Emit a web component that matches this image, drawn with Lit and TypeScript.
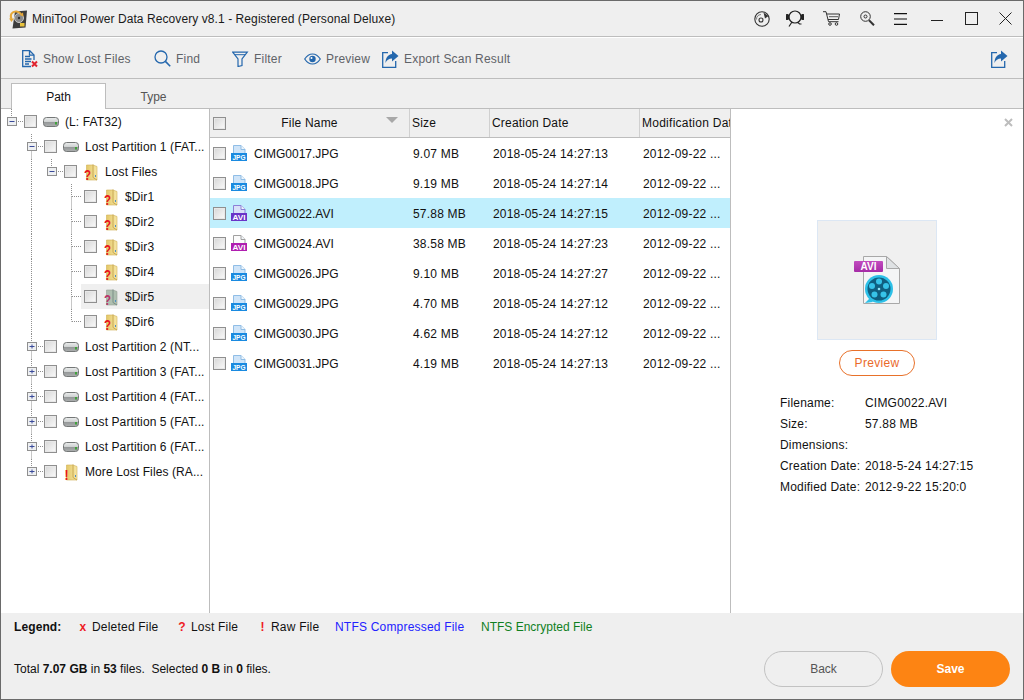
import { LitElement, html, css, svg } from "lit";
import { customElement } from "lit/decorators.js";

const hdd = html`<svg class="ic" width="16" height="16" viewBox="0 0 16 16">
  <defs><linearGradient id="hg" x1="0" y1="0" x2="0" y2="1"><stop offset="0" stop-color="#eceeee"/><stop offset=".5" stop-color="#cdd0d0"/><stop offset=".55" stop-color="#96999a"/><stop offset="1" stop-color="#adb0b0"/></linearGradient></defs>
  <rect x=".5" y="3.500" width="15" height="9" rx="3" fill="url(#hg)" stroke="#747777"/>
  <rect x="12" y="8" width="2" height="2.500" fill="#3fa23a"/>
</svg>`;

function folder(mark: string, color: string, dim = false) {
  return html`<svg class="ic tall" width="16" height="22" viewBox="0 0 16 22">
    <defs><linearGradient id="fg" x1="0" y1="0" x2="1" y2="0"><stop offset="0" stop-color="#e4c766"/><stop offset="1" stop-color="#f6e6a6"/></linearGradient></defs>
    <path d="M3.500 1h6.500l4 1.500V16H3.500z" fill="${dim ? "#aebfb0" : "url(#fg)"}" stroke="${dim ? "#93a095" : "#d0b055"}" stroke-width=".6"/>
    <path d="M10 .5V13.500L14 16" fill="none" stroke="${dim ? "#7b8f86" : "#c8a850"}" stroke-width="1"/>
    <rect x="12" y="11" width="1" height="2" fill="#4c8fc9"/>
    <text x="${mark === "!" ? 1.500 : 1}" y="16" textLength="${mark === "!" ? 4 : 7}" lengthAdjust="spacingAndGlyphs" font-family="Liberation Sans, sans-serif" font-weight="700" font-size="15" fill="${dim ? "#b8356a" : color}">${mark}</text>
  </svg>`;
}

function fileIcon(kind: string, selected = false) {
  const jpg = kind === "JPG";
  const page = jpg ? "#8fbde6" : selected ? "#8a80d8" : "#a0a0a0";
  const fill = jpg ? "#cfe4f8" : selected ? "#d9e0f8" : "#fbfbfb";
  const band = jpg ? "#1a8ae0" : selected ? "#6a34c8" : "#b01eb0";
  return html`<svg class="fi" width="16" height="16" viewBox="0 0 16 16">
    <path d="M2.500 .5h7.500l4 4v11h-11.500z" fill="${fill}" stroke="${page}"/>
    <path d="M10 .5v4h4" fill="#f2f6fa" stroke="${page}"/>
    <rect x="0" y="8" width="16" height="8" fill="${band}"/>
    <text x="1.500" y="14.600" textLength="13" lengthAdjust="spacingAndGlyphs" font-family="Liberation Sans, sans-serif" font-weight="700" font-size="7.500" fill="#fff">${kind}</text>
  </svg>`;
}

const lostIcon = html`<svg width="16" height="18" viewBox="0 0 16 18" fill="none" stroke="#2467ad" stroke-width="1.300">
  <path d="M9 16.500H.7V.7h7l4.300 4.300V10"/><path d="M7.500 .7v4.500h4.500"/><path d="M3 6.500h5M3 9h6.500M3 11.500h6M3 14h4" />
  <path d="M10 11.500l5 5M15 11.500l-5 5" stroke="#e0232f" stroke-width="2"/>
</svg>`;
const findIcon = html`<svg width="17" height="17" viewBox="0 0 17 17" fill="none" stroke="#2467ad" stroke-width="1.300"><circle cx="7" cy="7" r="6"/><path d="M11.400 11.400l4.800 4.800" stroke-width="1.600"/></svg>`;
const filterIcon = html`<svg width="17" height="16" viewBox="0 0 17 16" fill="none" stroke="#2467ad" stroke-width="1.200"><path d="M.7 1.200h14.600L10 8v6.500l-4 1V8z"/><path d="M3 3.700h10" stroke-width="1"/></svg>`;
const eyeIcon = html`<svg width="17" height="12" viewBox="0 0 17 12"><path d="M.7 6C3 2.500 5.500 1 8.500 1s5.500 1.500 7.800 5c-2.300 3.500-4.800 5-7.800 5S3 9.500.7 6z" fill="none" stroke="#2467ad" stroke-width="1.200"/><circle cx="8.500" cy="6" r="3.200" fill="#2467ad"/><circle cx="7.500" cy="5" r="1" fill="#fff"/></svg>`;
const exportIcon = html`<svg width="17" height="18" viewBox="0 0 17 18"><path d="M6 2.700H.7v14.600h13V11" fill="none" stroke="#2467ad" stroke-width="1.300"/><path d="M10 .5l6.500 5.500-6.500 5.500V8.500C7 8.500 4.500 10 3.500 13c0-5 2.500-8.500 6.500-9z" fill="#2467ad"/></svg>`;

const disc = html`<svg width="16" height="16" viewBox="0 0 16 16" fill="none" stroke="#333" stroke-width="1.100"><circle cx="8" cy="8" r="7.200"/><circle cx="7" cy="9" r="2"/><path d="M7 3.500a5 5 0 0 0-4.500 5" stroke-width=".6"/><path d="M9.500 1.500l5 3.500-3.500 2.500z" fill="#333" stroke="none"/></svg>`;
const headset = html`<svg width="18" height="17" viewBox="0 0 18 17" fill="none" stroke="#222" stroke-width="1.200"><circle cx="9" cy="7" r="6"/><path d="M6 12l-3 4.500M12 12.500l1.500 1.500h2"/><rect x="0" y="4.500" width="2.600" height="5" rx="1.200" fill="#222"/><rect x="15.400" y="4.500" width="2.600" height="5" rx="1.200" fill="#222"/></svg>`;
const cart = html`<svg width="17" height="15" viewBox="0 0 17 15" fill="none" stroke="#333" stroke-width="1"><path d="M0 .7h3l2.500 10h10"/><path d="M3.800 3h12.700l-1 5.500H5"/><path d="M6 5.700h9" stroke-width=".8"/><circle cx="7" cy="13" r="1.300"/><circle cx="13.500" cy="13" r="1.300"/></svg>`;
const searchKey = html`<svg width="15" height="15" viewBox="0 0 15 15" fill="none" stroke="#333"><circle cx="5.500" cy="5.500" r="4.800"/><circle cx="5.500" cy="5.500" r="1.500"/><path d="M9 9.300l5 5" stroke-width="2"/></svg>`;
const burger = html`<svg width="13" height="12" viewBox="0 0 13 12" stroke="#111" stroke-width="1.100"><path d="M0 .6h13M0 6h13M0 11.400h13"/></svg>`;
const minI = html`<svg width="14" height="14" viewBox="0 0 14 14" stroke="#222"><path d="M1 8.500h12"/></svg>`;
const maxI = html`<svg width="13" height="13" viewBox="0 0 13 13" fill="none" stroke="#222"><rect x=".5" y=".5" width="12" height="12"/></svg>`;
const closeI = html`<svg width="13" height="13" viewBox="0 0 13 13" stroke="#222"><path d="M.5.500l12 12M12.500.500l-12 12"/></svg>`;

const logo = html`<svg width="20" height="20" viewBox="0 0 20 20">
  <path d="M7 2.500l12-1-1.500 17-13 1z" fill="#3d3d3d"/>
  <circle cx="11" cy="9" r="4.500" fill="#8a8a8a" stroke="#c9c9c9" stroke-width="1"/>
  <circle cx="11" cy="9" r="1.200" fill="#333"/>
  <path d="M3.500 10C1.500 6 4 2 8.500 2.500c2 .2 3.500 1 4.500 2.500" fill="none" stroke="#e6a93a" stroke-width="2"/>
  <path d="M1 9.500h5L3.500 13z" fill="#e6a93a"/>
  <path d="M15 3.500l.5 4-4-1.500z" fill="#e6a93a"/>
  <rect x="12" y="14" width="4.500" height="3.500" fill="#e8c23c"/>
</svg>`;

const largeAvi = html`<svg width="46" height="48" viewBox="0 0 46 48">
  <defs><linearGradient id="pg" x1="0" y1="0" x2="0" y2="1"><stop offset="0" stop-color="#c24cc0"/><stop offset="1" stop-color="#a52ba6"/></linearGradient></defs>
  <path d="M9.500 .5h23l13 12v35h-36z" fill="#f4f5f6" stroke="#a8a8a8"/>
  <path d="M32.500 .5v12h13z" fill="#dfe2e4" stroke="#a8a8a8"/>
  <rect x="0" y="5" width="29" height="11" rx="1" fill="url(#pg)"/>
  <text x="14.500" y="14" text-anchor="middle" font-family="Liberation Sans, sans-serif" font-weight="700" font-size="10" fill="#fff">AVI</text>
  <circle cx="25" cy="33" r="14" fill="#2cc0e8"/>
  <circle cx="25" cy="33" r="11.500" fill="#0f5f80"/>
  ${[[25, 25.5], [32, 30], [29.500, 38.500], [20.500, 38.500], [18, 30]].map(([x, y]) => svg`<circle cx="${x}" cy="${y}" r="3" fill="#37c3e8"/>`)}
  <circle cx="25" cy="33" r="1.300" fill="#8fe2f5"/>
  <path d="M11 47l5-5 3 4z" fill="#2cc0e8"/>
</svg>`;

type Guide = "v" | "l" | "t" | "stub";

function guideCell(kind: Guide, exp?: "+" | "-") {
  const vBot = kind === "v" || kind === "t";
  const horiz = kind !== "v";
  return html`<svg class="guide" width="23" height="25" viewBox="0 0 23 25">
    <g stroke="#8f8f8f" stroke-dasharray="1 1" fill="none">
      <path d="M10.500 0V12.500"/>
      ${vBot ? svg`<path d="M10.500 12.500V25"/>` : ""}
      ${horiz ? svg`<path d="M11 12.500H${kind === "l" || (kind === "t" && !exp) ? 20 : 22}"/>` : ""}
    </g>
    ${exp
      ? svg`<rect x="6.500" y="8.500" width="9" height="8" fill="#eef0f2" stroke="#8f8f8f"/>
        <path d="M8.500 12.500h5" stroke="#3a4a9a"/>
        ${exp === "+" ? svg`<path d="M11 10.500v4" stroke="#3a4a9a"/>` : ""}`
      : ""}
  </svg>`;
}

interface TreeRow { level: number; exp?: "+" | "-"; icon: unknown; label: string; sel?: boolean; last?: boolean; }

const q = (dim = false) => folder("?", "#e8141c", dim);
const treeRows: TreeRow[] = [
  { level: 0, exp: "-", icon: hdd, label: "(L: FAT32)" },
  { level: 1, exp: "-", icon: hdd, label: "Lost Partition 1 (FAT..." },
  { level: 2, exp: "-", icon: q(), label: "Lost Files" },
  { level: 3, icon: q(), label: "$Dir1" },
  { level: 3, icon: q(), label: "$Dir2" },
  { level: 3, icon: q(), label: "$Dir3" },
  { level: 3, icon: q(), label: "$Dir4" },
  { level: 3, icon: q(true), label: "$Dir5", sel: true },
  { level: 3, icon: q(), label: "$Dir6", last: true },
  { level: 1, exp: "+", icon: hdd, label: "Lost Partition 2 (NT..." },
  { level: 1, exp: "+", icon: hdd, label: "Lost Partition 3 (FAT..." },
  { level: 1, exp: "+", icon: hdd, label: "Lost Partition 4 (FAT..." },
  { level: 1, exp: "+", icon: hdd, label: "Lost Partition 5 (FAT..." },
  { level: 1, exp: "+", icon: hdd, label: "Lost Partition 6 (FAT..." },
  { level: 1, exp: "+", icon: folder("!", "#e8141c"), label: "More Lost Files (RA...", last: true },
];

const files = [
  ["JPG", "CIMG0017.JPG", "9.07 MB", "2018-05-24 14:27:13"],
  ["JPG", "CIMG0018.JPG", "9.19 MB", "2018-05-24 14:27:14"],
  ["AVI", "CIMG0022.AVI", "57.88 MB", "2018-05-24 14:27:15"],
  ["AVI", "CIMG0024.AVI", "38.58 MB", "2018-05-24 14:27:23"],
  ["JPG", "CIMG0026.JPG", "9.10 MB", "2018-05-24 14:27:27"],
  ["JPG", "CIMG0029.JPG", "4.70 MB", "2018-05-24 14:27:12"],
  ["JPG", "CIMG0030.JPG", "4.62 MB", "2018-05-24 14:27:12"],
  ["JPG", "CIMG0031.JPG", "4.19 MB", "2018-05-24 14:27:13"],
];

const info = [
  ["Filename:", "CIMG0022.AVI"],
  ["Size:", "57.88 MB"],
  ["Dimensions:", ""],
  ["Creation Date:", "2018-5-24 14:27:15"],
  ["Modified Date:", "2012-9-22 15:20:0"],
];

const lineCell = html`<svg class="line" width="20" height="25" viewBox="0 0 20 25"><path d="M10.500 0V25" stroke="#8f8f8f" stroke-dasharray="1 1"/></svg>`;
const blank = html`<div class="indent"></div>`;

@customElement("app-root")
export class AppRoot extends LitElement {
  static styles = css`
    :host { display: block; width: 1024px; height: 700px; box-sizing: border-box; border: 1px solid #6a6a6a; background: #efefef;
      font-family: "Liberation Sans", Arial, sans-serif; font-size: 12px; color: #111; overflow: hidden; }
    * { box-sizing: border-box; }
    svg { display: block; flex: none; }
    .win { display: flex; flex-direction: column; height: 100%; }
    .title { height: 36px; flex: none; display: flex; align-items: center; border-bottom: 1px solid #bdbdbd; padding-left: 7px; }
    .title .name { margin-left: 4px; letter-spacing: .08px; white-space: nowrap; color: #1a1a1a; }
    .title .ctl { margin-left: auto; display: grid; grid-template-columns: 40px 26px 46px 26px 40px 34px 34px 34px; justify-items: center; align-items: center; padding-right: 1px; }
    .tools { height: 42px; flex: none; border-top: 1px solid #fff; border-bottom: 1px solid #bdbdbd; display: flex; align-items: center; padding: 1px 15px 0 21px; color: #5f6368; }
    .tool { display: flex; align-items: center; gap: 5px; white-space: nowrap; letter-spacing: .2px; }
    .tools .end { margin-left: auto; }
    .tabs { height: 30px; flex: none; display: flex; align-items: flex-end; border-bottom: 1px solid #bdbdbd; padding-left: 10px; }
    .tab { width: 95px; height: 26px; display: flex; align-items: center; justify-content: center; color: #555; margin-bottom: -1px; padding-top: 2px; }
    .tab.on { background: #fff; border: 1px solid #bdbdbd; border-bottom: none; color: #111; padding-top: 0; }
    .main { flex: 1; min-height: 0; display: flex; background: #fff; }
    .tree { width: 209px; flex: none; border-right: 1px solid #bdbdbd; }
    .row { display: flex; height: 25px; align-items: stretch; }
    .indent { width: 20px; flex: none; }
    .guide { margin-right: -3px; }
    .cell { flex: 1; min-width: 0; display: flex; align-items: center; padding-left: 3px; }
    .cell.sel { background: #efefef; }
    .check { width: 13px; height: 13px; flex: none; border: 1px solid #8f8f8f; background: linear-gradient(135deg, #d6d6d6, #fbfbfb); box-shadow: inset 0 0 0 1px #e8e8e8; }
    .ic { margin-left: 6px; }
    .ic.tall { margin-bottom: -6px; }
    .lbl { margin-left: 6px; white-space: nowrap; letter-spacing: .1px; }
    .table { width: 521px; flex: none; border-right: 1px solid #bdbdbd; display: flex; flex-direction: column; }
    .thead, .tr { display: grid; grid-template-columns: 200px 80px 150px 1fr; }
    .thead { height: 29px; background: #efefef; border-bottom: 1px solid #bdbdbd; }
    .th { display: flex; align-items: center; padding-left: 2px; border-right: 1px solid #d0d0d0; overflow: hidden; white-space: nowrap; letter-spacing: .2px; }
    .th:last-child { border-right: none; letter-spacing: .26px; }
    .th.first { padding-left: 3px; position: relative; }
    .th .t { flex: 1; text-align: center; padding-right: 16px; }
    .th .arrow { position: absolute; left: 176px; top: 8px; width: 0; height: 0; border-left: 6px solid transparent; border-right: 6px solid transparent; border-top: 6px solid #a8a8a8; }
    .tr { height: 30px; align-items: center; }
    .tr.on { background: #c0effd; }
    .td { padding: 1px 0 0 3px; white-space: nowrap; letter-spacing: .2px; overflow: hidden; }
    .td.first { display: flex; align-items: center; letter-spacing: 0; padding-top: 0; }
    .fi { margin-left: 5px; }
    .fn { margin: 1px 0 0 7px; }
    .preview { flex: 1; display: flex; flex-direction: column; align-items: center; position: relative; }
    .x { position: absolute; right: 10px; top: 9px; }
    .pbox { margin-top: 111px; width: 120px; height: 120px; flex: none; background: #f0f0f0; border: 1px solid #dce7f4; display: flex; align-items: center; justify-content: center; }
    .pbtn { margin-top: 10px; width: 76px; height: 26px; flex: none; border: 1px solid #e8712a; border-radius: 13px; color: #ea6a2a; display: flex; align-items: center; justify-content: center; letter-spacing: .3px; }
    .meta { align-self: flex-start; margin: 16px 0 0 49px; display: grid; grid-template-columns: 85px auto; grid-auto-rows: 21px; align-items: center; letter-spacing: .2px; }
    .legend { height: 27px; flex: none; display: flex; align-items: center; padding-left: 13px; white-space: nowrap; letter-spacing: .2px; }
    .it { display: flex; flex: none; }
    .lead { width: 64px; font-weight: 700; letter-spacing: .1px; }
    .m { color: #ee1c25; font-weight: 700; text-align: center; flex: none; }
    .m1 { width: 10px; margin-right: 4px; } .m2 { width: 8px; margin-right: 5px; } .m3 { width: 9px; margin-right: 4px; }
    .del { width: 100px; } .lost { width: 80px; } .raw { width: 77px; }
    .comp { width: 146px; color: #2222ff; } .enc { color: #0f7f1e; letter-spacing: 0; }
    .foot { height: 59px; flex: none; display: flex; align-items: flex-start; justify-content: space-between; padding: 11px 13px 0 13px; }
    .sum { margin-top: 11px; white-space: pre; }
    .btns { display: flex; gap: 8px; }
    .btn { width: 119px; height: 36px; border-radius: 18px; display: flex; align-items: center; justify-content: center; }
    .back { border: 1px solid #c2c2c2; color: #555; }
    .save { background: #fd8413; color: #fff; font-weight: 700; }
  `;

  private tool(icon: unknown, label: string, w: number) {
    return html`<div class="tool" style="width:${w}px">${icon}<span>${label}</span></div>`;
  }

  private guides(r: TreeRow) {
    if (r.level === 0) return [guideCell("stub", "-")];
    if (r.level === 1) return [blank, guideCell(r.last ? "stub" : "t", r.exp)];
    if (r.level === 2) return [blank, lineCell, guideCell("stub", "-")];
    return [blank, lineCell, blank, guideCell(r.last ? "l" : "t")];
  }

  render() {
    return html`<div class="win">
      <div class="title">${logo}<span class="name">MiniTool Power Data Recovery v8.1 - Registered (Personal Deluxe)</span>
        <div class="ctl">${disc}${headset}${cart}${searchKey}${burger}${minI}${maxI}${closeI}</div>
      </div>
      <div class="tools">
        ${this.tool(lostIcon, "Show Lost Files", 132)}
        ${this.tool(findIcon, "Find", 78)}
        ${this.tool(filterIcon, "Filter", 72)}
        ${this.tool(eyeIcon, "Preview", 78)}
        ${this.tool(exportIcon, "Export Scan Result", 130)}
        <div class="end">${exportIcon}</div>
      </div>
      <div class="tabs"><div class="tab on">Path</div><div class="tab">Type</div></div>
      <div class="main">
        <div class="tree">
          ${treeRows.map((r) => html`<div class="row">${this.guides(r)}
            <div class="cell ${r.sel ? "sel" : ""}"><span class="check"></span>${r.icon}<span class="lbl">${r.label}</span></div></div>`)}
        </div>
        <div class="table">
          <div class="thead">
            <div class="th first"><span class="check"></span><span class="t">File Name</span><span class="arrow"></span></div>
            <div class="th"><span>Size</span></div>
            <div class="th"><span>Creation Date</span></div>
            <div class="th"><span>Modification Dat</span></div>
          </div>
          ${files.map((f, i) => html`<div class="tr ${i === 2 ? "on" : ""}">
            <div class="td first"><span class="check"></span>${fileIcon(f[0], i === 2)}<span class="fn">${f[1]}</span></div>
            <div class="td">${f[2]}</div><div class="td">${f[3]}</div><div class="td">2012-09-22 ...</div>
          </div>`)}
        </div>
        <div class="preview">
          <svg class="x" width="9" height="9" viewBox="0 0 9 9" stroke="#bdbdbd" stroke-width="2"><path d="M1 1l7 7M8 1l-7 7"/></svg>
          <div class="pbox">${largeAvi}</div>
          <div class="pbtn">Preview</div>
          <div class="meta">${info.map(([a, b]) => html`<span>${a}</span><span>${b}</span>`)}</div>
        </div>
      </div>
      <div class="legend">
        <span class="it lead">Legend:</span>
        <span class="it del"><span class="m m1">x</span>Deleted File</span>
        <span class="it lost"><span class="m m2">?</span>Lost File</span>
        <span class="it raw"><span class="m m3">!</span>Raw File</span>
        <span class="it comp">NTFS Compressed File</span>
        <span class="it enc">NTFS Encrypted File</span>
      </div>
      <div class="foot">
        <div class="sum">Total <b>7.07 GB</b> in <b>53</b> files.  Selected <b>0 B</b> in <b>0</b> files.</div>
        <div class="btns"><div class="btn back">Back</div><div class="btn save">Save</div></div>
      </div>
    </div>`;
  }
}
